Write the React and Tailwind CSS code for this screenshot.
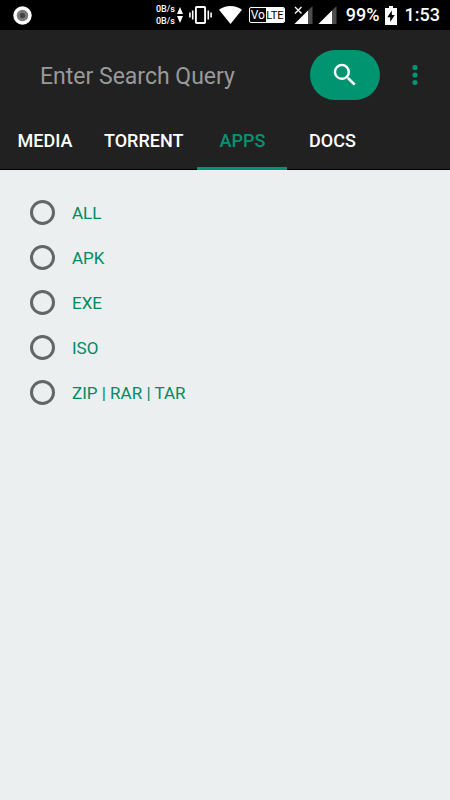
import { useState } from "react";

const TABS = [
    { id: "media", label: "MEDIA", options: ["VIDEO", "AUDIO", "IMAGE"] },
    { id: "torrent", label: "TORRENT", options: ["ALL"] },
    { id: "apps", label: "APPS", options: ["ALL", "APK", "EXE", "ISO", "ZIP | RAR | TAR"] },
    { id: "docs", label: "DOCS", options: ["ALL", "PDF", "DOC"] },
];

function StatusBar() {
    return (
        <div className="flex h-[30px] items-center bg-black pl-[13px] pr-[10px] text-white">
            <svg className="size-[19px]" viewBox="0 0 19 19" aria-hidden="true">
                <circle cx="9.5" cy="9.5" r="9.2" fill="#fff" />
                <circle cx="9.5" cy="9.5" r="5.8" fill="#7a7a7a" />
                <circle cx="9.5" cy="9.5" r="2.7" fill="#444" />
            </svg>

            <div className="ml-auto flex items-center">
                <div className="text-right text-[9px] font-medium leading-[12px]">
                    <div>0B/s</div>
                    <div>0B/s</div>
                </div>
                <svg className="ml-[2px] h-[16px] w-[6px]" viewBox="0 0 6 16" fill="#fff" aria-hidden="true">
                    <path d="M3 0 6 7H0zM0 9h6L3 16z" />
                </svg>
                <svg className="ml-[6px] h-[18px] w-[23px]" viewBox="0 0 23 18" fill="none" stroke="#fff" aria-hidden="true">
                    <rect x="6.9" y="1" width="9.2" height="16" rx="0.8" strokeWidth="1.9" />
                    <path d="M3.7 4.5v9M19.3 4.5v9M0.9 6.5v5M22.1 6.5v5" strokeWidth="1.6" />
                </svg>
                <svg className="ml-[7px] h-[18px] w-[23px]" viewBox="0 0 23 18" fill="#fff" aria-hidden="true">
                    <path d="M11.5 18 0 3.8C3.2 1.4 7.1 0 11.5 0S19.8 1.4 23 3.8z" />
                </svg>
                <div className="ml-[7px] flex h-[16px] w-[36px] overflow-hidden rounded-[2px] border border-white text-[12px] leading-[15px]">
                    <span className="w-[16px] text-center">Vo</span>
                    <span className="flex-1 bg-white text-center text-[11px] text-black">LTE</span>
                </div>
                <svg className="ml-[9px] h-[18px] w-[19px]" viewBox="0 0 19 18" aria-hidden="true">
                    <path d="M0.5 18 18.5 0v18z" fill="#4d4d4d" />
                    <path d="M0.5 18 14 4.5V18z" fill="#fff" />
                    <path d="M0 0h8.5v8.5H0z" fill="#000" />
                    <path d="M1 1 7.5 7.5M7.5 1 1 7.5" stroke="#fff" strokeWidth="1.3" />
                </svg>
                <svg className="ml-[5px] h-[18px] w-[19px]" viewBox="0 0 19 18" aria-hidden="true">
                    <path d="M0.5 18 18.5 0v18z" fill="#4d4d4d" />
                    <path d="M0.5 18 14 4.5V18z" fill="#fff" />
                </svg>
                <span className="ml-[9px] text-[18px] font-medium leading-[30px]">99%</span>
                <svg className="ml-[5px] h-[19px] w-[12px]" viewBox="0 0 12 19" aria-hidden="true">
                    <path d="M4 0h4v2h4v17H0V2h4z" fill="#fff" />
                    <path d="M6.8 4.5 2.3 11.3h2.9v4.6l4.5-6.8H6.8z" fill="#000" />
                </svg>
                <span className="ml-[8px] text-[18px] font-medium leading-[30px]">1:53</span>
            </div>
        </div>
    );
}

function SearchBar() {
    const [query, setQuery] = useState("");

    return (
        <form className="flex items-center pb-[10px] pl-[40px] pt-[20px]" onSubmit={e => e.preventDefault()}>
            <input
                type="text"
                aria-label="Search query"
                className="h-[50px] min-w-0 flex-1 bg-transparent pt-[2px] text-[23px] text-white outline-none placeholder:text-[#999999]"
                placeholder="Enter Search Query"
                value={query}
                onChange={e => setQuery(e.target.value)}
            />
            <button type="submit" aria-label="Search" className="flex h-[50px] w-[70px] items-center justify-center rounded-full bg-[#009471]">
                <svg className="size-[30px]" viewBox="0 0 24 24" fill="#fff" aria-hidden="true">
                    <path d="M15.5 14h-.79l-.28-.27A6.471 6.471 0 0 0 16 9.5 6.5 6.5 0 1 0 9.5 16c1.61 0 3.09-.59 4.23-1.57l.27.28v.79l5 4.99L20.49 19l-4.99-5zm-6 0C7.01 14 5 11.99 5 9.5S7.01 5 9.5 5 14 7.01 14 9.5 11.99 14 9.5 14z" />
                </svg>
            </button>
            <button type="button" aria-label="More options" className="flex h-[50px] w-[70px] items-center justify-center">
                <svg className="h-[20px] w-[6px]" viewBox="0 0 6 20" fill="#009471" aria-hidden="true">
                    <circle cx="3" cy="2.5" r="2.6" />
                    <circle cx="3" cy="10" r="2.6" />
                    <circle cx="3" cy="17.5" r="2.6" />
                </svg>
            </button>
        </form>
    );
}

export default function App() {
    const [activeTab, setActiveTab] = useState("apps");
    const [selected, setSelected] = useState("");

    const current = TABS.find(tab => tab.id === activeTab);

    return (
        <div className="flex min-h-screen flex-col bg-[#ebeff0] font-[Roboto,sans-serif]">
            <StatusBar />

            <header className="bg-[#212121]">
                <SearchBar />
                <div role="tablist" className="flex h-[60px] border-b border-black">
                    {TABS.map(tab => (
                        <button
                            key={tab.id}
                            type="button"
                            role="tab"
                            aria-selected={activeTab === tab.id}
                            className={`-mb-px h-[60px] min-w-[90px] border-b-[3px] px-[14px] pt-[3px] text-[18px] font-medium ${activeTab === tab.id
                                    ? "border-[#009471] text-[#009471]"
                                    : "border-transparent text-white"
                                }`}
                            onClick={() => setActiveTab(tab.id)}
                        >
                            {tab.label}
                        </button>
                    ))}
                </div>
            </header>

            <main className="px-[30px] py-[20px]">
                {current.options.map(option => (
                    <label key={option} className="flex h-[45px] items-center gap-[17px] text-[17px] text-[#008a60]">
                        <input
                            type="radio"
                            name="fileType"
                            className="size-[25px] appearance-none rounded-full border-[3px] border-[#636566] checked:border-[8px] checked:border-[#009471]"
                            checked={selected === option}
                            onChange={() => setSelected(option)}
                        />
                        <span className="pt-[2px]">{option}</span>
                    </label>
                ))}
            </main>
        </div>
    );
}
